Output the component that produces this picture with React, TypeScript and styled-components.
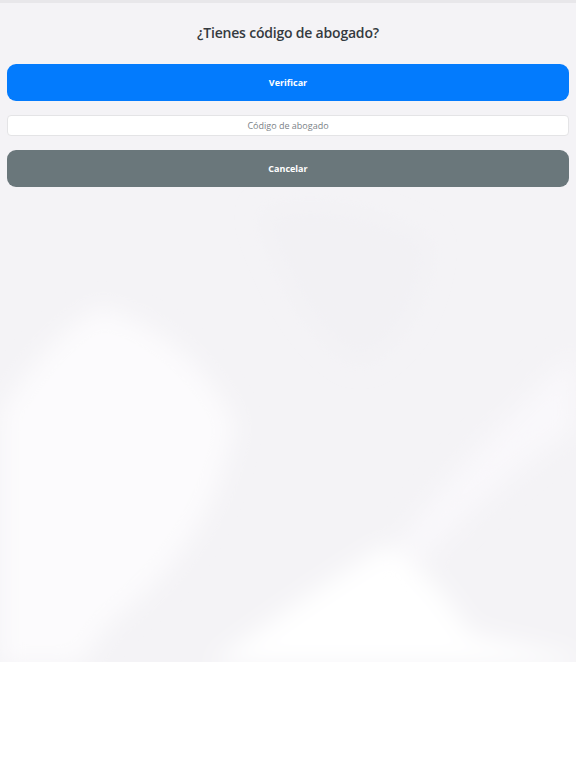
import React from "react";
import styled, { createGlobalStyle } from "styled-components";

const Global = createGlobalStyle`
  html, body { margin: 0; padding: 0; background: #ffffff; }
  body { font-family: "Open Sans", "Noto Sans", Arial, sans-serif; }
  * { box-sizing: border-box; }
`;

const waveSvg = `<svg xmlns='http://www.w3.org/2000/svg' width='576' height='662' viewBox='0 0 576 662'>
<defs><filter id='b' x='-20%' y='-20%' width='140%' height='140%'><feGaussianBlur stdDeviation='12'/></filter></defs>
<rect width='576' height='662' fill='#f4f3f6'/>
<g filter='url(#b)'>
<path d='M0,410 Q50,330 100,305 Q190,330 235,420 Q215,540 110,620 L80,662 L0,662 Z' fill='#fcfbfd'/>
<path d='M210,662 Q300,595 386,542 Q430,565 470,630 L576,655 L576,662 Z' fill='#ffffff'/>
<path d='M576,350 Q470,445 395,545 L420,560 Q500,475 576,425 Z' fill='#f9f8fb'/>
<path d='M260,210 Q350,190 430,240 Q420,330 360,360 Q300,330 260,210 Z' fill='#f2f1f4'/>
</g>
</svg>`;

const Backdrop = styled.div`
  min-height: 662px;
  background-color: #f4f3f6;
  background-image: url("data:image/svg+xml,${encodeURIComponent(waveSvg)}");
  background-repeat: no-repeat;
  background-size: 576px 662px;
  border-top: 3px solid #e8e7ea;
`;

const Panel = styled.div`
  display: flex;
  flex-direction: column;
  padding: 0 7px;
`;

const Title = styled.h2`
  margin: 20px 0 0;
  height: 20px;
  line-height: 20px;
  text-align: center;
  font-size: 14px;
  font-weight: 600;
  color: #343a40;
  letter-spacing: -0.2px;
`;

const ActionButton = styled.button<{ $variant: "primary" | "secondary"; $top: number }>`
  display: flex;
  align-items: center;
  justify-content: center;
  height: 37px;
  margin-top: ${(p) => p.$top}px;
  border: none;
  border-radius: 9px;
  background: ${(p) => (p.$variant === "primary" ? "#037bfd" : "#6a777b")};
  color: #ffffff;
  font-family: "Open Sans", Arial, sans-serif;
  font-size: 9px;
  font-weight: 700;
  cursor: pointer;
`;

const CodeInput = styled.input`
  height: 21px;
  margin-top: 14px;
  border: 1px solid #e4e4e6;
  border-radius: 4px;
  background: #ffffff;
  text-align: center;
  font-family: "Open Sans", Arial, sans-serif;
  font-size: 9px;
  color: #495057;
  outline: none;
  &::placeholder { color: #7b8287; }
`;

export default function App() {
  return (
    <>
      <Global />
      <Backdrop>
        <Panel>
          <Title>¿Tienes código de abogado?</Title>
          <ActionButton $variant="primary" $top={21}>Verificar</ActionButton>
          <CodeInput placeholder="Código de abogado" />
          <ActionButton $variant="secondary" $top={14}>Cancelar</ActionButton>
        </Panel>
      </Backdrop>
    </>
  );
}
